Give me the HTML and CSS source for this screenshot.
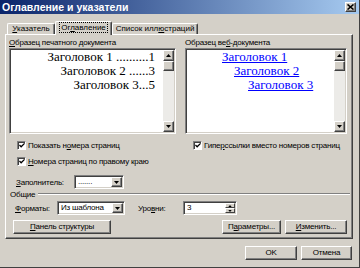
FILE: index.html
```html
<!DOCTYPE html>
<html lang="ru">
<head>
    <meta charset="UTF-8">
    <meta name="viewport" content="width=device-width, initial-scale=1.0">
    <title>Оглавление и указатели</title>
    <link rel="stylesheet" href="styles.css">
</head>
<body>
    <div class="window">
        <div class="titlebar">
            <span class="title">Оглавление и указатели</span>
            <span class="close">
                <svg width="7" height="6" viewBox="0 0 7 6"><path d="M0.5 0.5L6.5 5.5M6.5 0.5L0.5 5.5" stroke="#000" stroke-width="1.6"/></svg>
            </span>
        </div>

        <div class="tabs">
            <div class="tab tab-index"><u>У</u>казатель</div>
            <div class="tab tab-toc active"><span class="focus">Ог<u>л</u>авление</span></div>
            <div class="tab tab-figs">Список илл<u>ю</u>страций</div>
        </div>

        <div class="panel">
            <div class="samples">
                <div class="col">
                    <div class="caption"><u>О</u>бразец печатного документа</div>
                    <div class="preview">
                        <div class="lines print-lines">
                            <div>Заголовок 1 ..........1</div>
                            <div>Заголовок 2 ......3</div>
                            <div>Заголовок 3...5</div>
                        </div>
                        <div class="scrollbar">
                            <span class="sb-btn"><svg width="5" height="3" viewBox="0 0 5 3"><polygon points="0,3 2.5,0 5,3" fill="#000"/></svg></span>
                            <span class="sb-btn thumb"></span>
                            <span class="track"></span>
                            <span class="sb-btn"><svg width="5" height="3" viewBox="0 0 5 3"><polygon points="0,0 5,0 2.5,3" fill="#000"/></svg></span>
                        </div>
                    </div>
                    <div class="check">
                        <span class="box"><svg width="7" height="7" viewBox="0 0 7 7"><polyline points="0.5,3 2.5,5 6.5,1" fill="none" stroke="#000" stroke-width="1.5"/></svg></span>
                        <span class="check-text">Показать н<u>о</u>мера страниц</span>
                    </div>
                    <div class="check">
                        <span class="box"><svg width="7" height="7" viewBox="0 0 7 7"><polyline points="0.5,3 2.5,5 6.5,1" fill="none" stroke="#000" stroke-width="1.5"/></svg></span>
                        <span class="check-text"><u>Н</u>омера страниц по правому краю</span>
                    </div>
                    <div class="fill-row">
                        <span class="fill-label"><u>З</u>аполнитель:</span>
                        <div class="combo combo-fill">
                            <span class="value">.......</span>
                            <span class="drop"><svg width="5" height="3" viewBox="0 0 5 3"><polygon points="0,0 5,0 2.5,3" fill="#000"/></svg></span>
                        </div>
                    </div>
                </div>

                <div class="col">
                    <div class="caption">Образец ве<u>б</u>-документа</div>
                    <div class="preview">
                        <div class="lines web-lines">
                            <div class="lvl1">Заголовок 1</div>
                            <div class="lvl2">Заголовок 2</div>
                            <div class="lvl3">Заголовок 3</div>
                        </div>
                        <div class="scrollbar">
                            <span class="sb-btn"><svg width="5" height="3" viewBox="0 0 5 3"><polygon points="0,3 2.5,0 5,3" fill="#000"/></svg></span>
                            <span class="sb-btn thumb"></span>
                            <span class="track"></span>
                            <span class="sb-btn"><svg width="5" height="3" viewBox="0 0 5 3"><polygon points="0,0 5,0 2.5,3" fill="#000"/></svg></span>
                        </div>
                    </div>
                    <div class="check">
                        <span class="box"><svg width="7" height="7" viewBox="0 0 7 7"><polyline points="0.5,3 2.5,5 6.5,1" fill="none" stroke="#000" stroke-width="1.5"/></svg></span>
                        <span class="check-text">Гипе<u>р</u>ссылки вместо номеров страниц</span>
                    </div>
                </div>
            </div>

            <div class="group">
                <span>Общие</span>
                <i class="etch"></i>
            </div>

            <div class="formats-row">
                <span class="formats-label"><u>Ф</u>орматы:</span>
                <div class="combo combo-formats">
                    <span class="value">Из шаблона</span>
                    <span class="drop"><svg width="5" height="3" viewBox="0 0 5 3"><polygon points="0,0 5,0 2.5,3" fill="#000"/></svg></span>
                </div>
                <span class="levels-label">Уро<u>в</u>ни:</span>
                <div class="combo spin">
                    <span class="value">3</span>
                    <span class="spin-btns">
                        <span class="spin-btn"><svg width="5" height="3" viewBox="0 0 5 3"><polygon points="0,3 2.5,0 5,3" fill="#000"/></svg></span>
                        <span class="spin-btn"><svg width="5" height="3" viewBox="0 0 5 3"><polygon points="0,0 5,0 2.5,3" fill="#000"/></svg></span>
                    </span>
                </div>
            </div>

            <div class="buttons-row">
                <span class="btn btn-outline"><u>П</u>анель структуры</span>
                <span class="spacer"></span>
                <span class="btn btn-options">П<u>а</u>раметры...</span>
                <span class="btn btn-modify"><u>И</u>зменить...</span>
            </div>
        </div>

        <div class="footer">
            <span class="btn btn-ok">OK</span>
            <span class="btn btn-cancel">Отмена</span>
        </div>
    </div>
</body>
</html>
```

FILE: styles.css
```css
* {
    box-sizing: border-box;
}
body {
    margin: 0;
    padding: 0;
    font-family: "Liberation Sans", Arial, sans-serif;
    font-size: 8px;
    letter-spacing: -0.2px;
    color: #000;
    background: #d4d0c8;
}
u {
    text-decoration: underline;
}
.window {
    width: 360px;
    height: 268px;
    background: #d4d0c8;
    border-right: 1px solid #404040;
    border-bottom: 1px solid #404040;
    display: flex;
    flex-direction: column;
}
.titlebar {
    height: 14px;
    background: linear-gradient(to right, #0a246a, #a6caf0);
    display: flex;
    align-items: center;
    justify-content: space-between;
    padding-left: 2px;
    padding-right: 3px;
}
.title {
    color: #fff;
    font-weight: bold;
    font-size: 10.5px;
    letter-spacing: 0;
}
.close {
    width: 11px;
    height: 10px;
    background: #d4d0c8;
    border: 1px solid;
    border-color: #fff #404040 #404040 #fff;
    box-shadow: inset -1px -1px #808080;
    display: flex;
    align-items: center;
    justify-content: center;
}

/* tabs */
.tabs {
    margin-top: 7px;
    height: 13px;
    padding-left: 7px;
    display: flex;
    align-items: flex-end;
}
.tab {
    position: relative;
    height: 11px;
    line-height: 9px;
    text-align: center;
    letter-spacing: 0;
    border: 1px solid;
    border-bottom: none;
    border-color: #fff #404040 #fff #fff;
    border-radius: 2px 2px 0 0;
    box-shadow: inset -1px 0 #808080;
}
.tab-index {
    width: 48px;
}
.tab-toc {
    width: 57px;
}
.tab-figs {
    width: 86px;
}
.tab.active {
    z-index: 2;
    height: 14px;
    margin-bottom: -1px;
    background: #d4d0c8;
    padding-top: 1px;
}
.focus {
    outline: 1px dotted #000;
    padding: 0 1px;
}

/* panel */
.panel {
    position: relative;
    z-index: 1;
    margin-left: 5px;
    width: 348px;
    height: 205px;
    border: 1px solid;
    border-color: #fff #404040 #404040 #fff;
    box-shadow: inset -1px -1px #808080;
    padding: 3px 5px 0 3px;
    display: flex;
    flex-direction: column;
}
.samples {
    display: grid;
    grid-template-columns: 167px 162px;
    column-gap: 9px;
}
.col {
    display: flex;
    flex-direction: column;
}
.caption {
    height: 10px;
    line-height: 10px;
}
.preview {
    height: 86px;
    background: #fff;
    border: 1px solid;
    border-color: #808080 #fff #fff #808080;
    box-shadow: inset 1px 1px #404040, inset -1px -1px #d4d0c8;
    padding: 1px;
    display: flex;
}
.lines {
    flex: 1;
    font-family: "Liberation Serif", "Times New Roman", serif;
    font-size: 13px;
    line-height: 14px;
    letter-spacing: 0;
}
.print-lines {
    text-align: right;
    padding-right: 8px;
}
.web-lines div {
    color: #0000ff;
    text-decoration: underline;
}
.web-lines .lvl1 {
    padding-left: 35px;
}
.web-lines .lvl2 {
    padding-left: 47px;
}
.web-lines .lvl3 {
    padding-left: 61px;
}
.scrollbar {
    width: 11px;
    display: flex;
    flex-direction: column;
}
.sb-btn {
    width: 11px;
    height: 11px;
    background: #d4d0c8;
    border: 1px solid;
    border-color: #fff #404040 #404040 #fff;
    box-shadow: inset -1px -1px #808080;
    display: flex;
    align-items: center;
    justify-content: center;
}
.thumb {
    height: 10px;
}
.track {
    flex: 1;
    background: #ecebe8;
}

/* checkboxes */
.check {
    margin-top: 6px;
    height: 10px;
    padding-left: 8px;
    display: flex;
    align-items: center;
    gap: 2px;
    white-space: nowrap;
}
.box {
    width: 9px;
    height: 9px;
    background: #fff;
    border: 1px solid;
    border-color: #808080 #fff #fff #808080;
    box-shadow: inset 1px 1px #404040;
    display: flex;
    align-items: center;
    justify-content: center;
    padding: 1px 0 0 1px;
}

/* combos */
.fill-row {
    margin-top: 9px;
    padding-left: 7px;
    display: flex;
    align-items: center;
}
.fill-label {
    width: 58px;
}
.combo {
    height: 14px;
    background: #fff;
    border: 1px solid;
    border-color: #808080 #fff #fff #808080;
    box-shadow: inset 1px 1px #404040, inset -1px -1px #d4d0c8;
    padding: 1px;
    display: flex;
}
.combo .value {
    flex: 1;
    line-height: 10px;
    padding-left: 2px;
    white-space: nowrap;
}
.combo-fill {
    width: 50px;
}
.drop {
    width: 11px;
    height: 10px;
    background: #d4d0c8;
    border: 1px solid;
    border-color: #fff #404040 #404040 #fff;
    box-shadow: inset -1px -1px #808080;
    display: flex;
    align-items: center;
    justify-content: center;
}

/* general group */
.group {
    height: 10px;
    margin-top: 0;
    margin-right: -3px;
    padding-left: 1px;
    display: flex;
    align-items: center;
}
.etch {
    flex: 1;
    height: 2px;
    margin-left: 3px;
    border-top: 1px solid #808080;
    border-bottom: 1px solid #fff;
}
.formats-row {
    margin-top: 2px;
    padding-left: 6px;
    display: flex;
    align-items: center;
}
.formats-label {
    width: 42px;
}
.combo-formats {
    width: 68px;
}
.levels-label {
    margin-left: 13px;
    width: 45px;
}
.spin {
    width: 54px;
}
.spin-btns {
    width: 10px;
    display: flex;
    flex-direction: column;
}
.spin-btn {
    flex: 1;
    background: #d4d0c8;
    border: 1px solid;
    border-color: #fff #404040 #404040 #fff;
    display: flex;
    align-items: center;
    justify-content: center;
}
.spin-btn svg {
    width: 4px;
    height: 2px;
}

/* buttons */
.buttons-row {
    margin-top: 5px;
    padding-left: 4px;
    display: flex;
    gap: 4px;
}
.spacer {
    flex: 1;
}
.btn {
    height: 14px;
    line-height: 12px;
    text-align: center;
    background: #d4d0c8;
    border: 1px solid;
    border-color: #fff #404040 #404040 #fff;
    box-shadow: inset -1px -1px #808080;
    white-space: nowrap;
}
.btn-outline {
    width: 98px;
}
.btn-options {
    width: 59px;
}
.btn-modify {
    width: 62px;
}
.footer {
    margin-top: 7px;
    padding-right: 7px;
    display: flex;
    justify-content: flex-end;
    gap: 4px;
}
.btn-ok {
    width: 52px;
}
.btn-cancel {
    width: 51px;
}
```
